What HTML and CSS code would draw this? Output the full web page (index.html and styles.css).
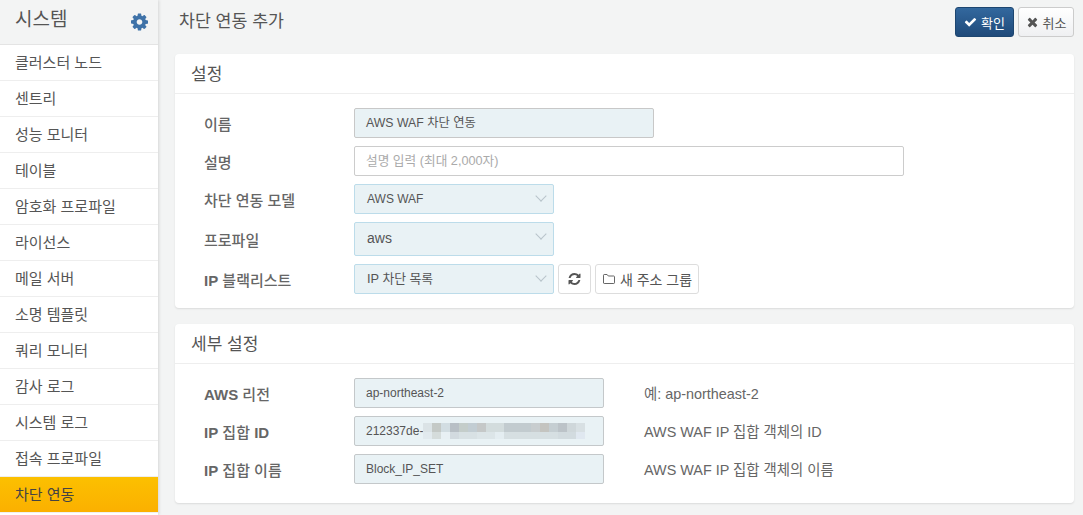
FILE: index.html
```html
<!DOCTYPE html>
<html lang="ko">
  <head>
    <meta charset="utf-8">
    <title>차단 연동 추가</title>
    <link rel="stylesheet" href="styles.css">
  </head>
  <body>
    <div class="sidebar">
      <div class="sidebar-header">
        <span class="sidebar-title">시스템</span>
        <svg class="gear" viewBox="0 0 1536 1792" aria-hidden="true"><path d="M1024 896q0-106-75-181t-181-75-181 75-75 181 75 181 181 75 181-75 75-181zm512-109v222q0 12-8 23t-20 13l-185 28q-19 54-39 91 35 50 107 138 10 12 10 25t-9 23q-27 37-99 108t-94 71q-12 0-26-9l-138-108q-44 23-91 38-16 136-29 186-7 28-36 28h-222q-14 0-24.500-8.500t-11.500-21.500l-28-184q-49-16-90-37l-141 107q-10 9-25 9-14 0-25-11-126-114-165-168-7-10-7-23 0-12 8-23 15-21 51-66.500t54-70.500q-27-50-41-99l-183-27q-13-2-21-12.500t-8-23.500v-222q0-12 8-23t19-13l186-28q14-46 39-92-40-57-107-138-10-12-10-24 0-10 9-23 26-36 98.500-107.500t94.500-71.500q13 0 26 10l138 107q44-23 91-38 16-136 29-186 7-28 36-28h222q14 0 24.500 8.500t11.500 21.500l28 184q49 16 90 37l142-107q9-9 24-9 13 0 25 10 129 119 165 170 7 8 7 22 0 12-8 23-15 21-51 66.500t-54 70.500q26 50 41 98l183 28q13 2 21 12.500t8 23.500z"/></svg>
      </div>
      <ul class="menu">
        <li>클러스터 노드</li>
        <li>센트리</li>
        <li>성능 모니터</li>
        <li>테이블</li>
        <li>암호화 프로파일</li>
        <li>라이선스</li>
        <li>메일 서버</li>
        <li>소명 템플릿</li>
        <li>쿼리 모니터</li>
        <li>감사 로그</li>
        <li>시스템 로그</li>
        <li>접속 프로파일</li>
        <li class="active">차단 연동</li>
      </ul>
    </div>

    <div class="main">
      <div class="page-top">
        <h1>차단 연동 추가</h1>
        <div class="actions">
          <button class="btn btn-primary">
            <svg class="icon" viewBox="0 0 1792 1792"><path d="M1671 566q0 40-28 68l-724 724-136 136q-28 28-68 28t-68-28l-136-136-362-362q-28-28-28-68t28-68l136-136q28-28 68-28t68 28l294 295 656-657q28-28 68-28t68 28l136 136q28 28 28 68z"/></svg>
            확인
          </button>
          <button class="btn btn-cancel">
            <svg class="icon" viewBox="0 0 1408 1792"><path d="M1298 1322q0 40-28 68l-136 136q-28 28-68 28t-68-28l-294-294-294 294q-28 28-68 28t-68-28l-136-136q-28-28-28-68t28-68l294-294-294-294q-28-28-28-68t28-68l136-136q28-28 68-28t68 28l294 294 294-294q28-28 68-28t68 28l136 136q28 28 28 68t-28 68l-294 294 294 294q28 28 28 68z"/></svg>
            취소
          </button>
        </div>
      </div>

      <div class="panel">
        <div class="panel-title">설정</div>
        <div class="panel-body settings">
          <div class="row">
            <label>이름</label>
            <div class="field field-name">AWS WAF 차단 연동</div>
          </div>
          <div class="row">
            <label>설명</label>
            <div class="field field-desc">설명 입력 (최대 2,000자)</div>
          </div>
          <div class="row">
            <label>차단 연동 모델</label>
            <div class="field select">AWS WAF</div>
          </div>
          <div class="row">
            <label>프로파일</label>
            <div class="field select select-tall">aws</div>
          </div>
          <div class="row">
            <label><b>IP</b> 블랙리스트</label>
            <div class="field select select-ko">IP 차단 목록</div>
            <button class="btn btn-icon">
              <svg class="icon" viewBox="0 0 1536 1792"><path d="M1511 1056q0 5-1 7-64 268-268 434.500t-478 166.500q-146 0-282.500-55t-243.500-157l-129 129q-19 19-45 19t-45-19-19-45v-448q0-26 19-45t45-19h448q26 0 45 19t19 45-19 45l-137 137q71 66 161 102t187 36q134 0 250-65t186-179q11-17 53-117 8-23 30-23h192q13 0 22.500 9.500t9.500 22.500zm25-800v448q0 26-19 45t-45 19h-448q-26 0-45-19t-19-45 19-45l138-138q-148-137-349-137-134 0-250 65t-186 179q-11 17-53 117-8 23-30 23h-199q-13 0-22.500-9.500t-9.500-22.500v-7q65-268 270-434.500t480-166.500q146 0 284 55.500t245 156.500l130-129q19-19 45-19t45 19 19 45z"/></svg>
            </button>
            <button class="btn btn-group">
              <svg class="icon-line" viewBox="0 0 14 12"><path d="M1.500 10V2.200c0-.4.300-.7.700-.7h2.900l1.200 1.500h5.500c.4 0 .7.300.7.700v6.100c0 .4-.3.700-.7.700H2.200c-.4 0-.7-.3-.7-.5z"/></svg>
              새 주소 그룹
            </button>
          </div>
        </div>
      </div>

      <div class="panel">
        <div class="panel-title">세부 설정</div>
        <div class="panel-body details">
          <div class="row">
            <label><b>AWS</b> 리전</label>
            <div class="field field-detail">ap-northeast-2</div>
            <span class="hint">예: ap-northeast-2</span>
          </div>
          <div class="row">
            <label><b>IP</b> 집합 <b>ID</b></label>
            <div class="field field-detail">212337de-<span class="mosaic"></span></div>
            <span class="hint">AWS WAF IP 집합 객체의 ID</span>
          </div>
          <div class="row">
            <label><b>IP</b> 집합 이름</label>
            <div class="field field-detail">Block_IP_SET</div>
            <span class="hint">AWS WAF IP 집합 객체의 이름</span>
          </div>
        </div>
      </div>
    </div>
  </body>
</html>
```

FILE: styles.css
```css
* {
  box-sizing: border-box;
}

body {
  margin: 0;
  height: 515px;
  overflow: hidden;
  display: flex;
  background: #f3f4f4;
  color: #555;
  font-family: "Liberation Sans", "Noto Sans CJK KR", sans-serif;
  font-size: 14px;
}

.sidebar {
  width: 158px;
  flex-shrink: 0;
  background: #fff;
  box-shadow: 1px 0 3px rgba(0, 0, 0, 0.12);
}

.sidebar-header {
  height: 45px;
  display: flex;
  justify-content: space-between;
  padding: 0 10px 0 15px;
  background: #f3f4f4;
  border-bottom: 1px solid #e4e4e4;
}

.sidebar-title {
  font-size: 19px;
  line-height: 39px;
  color: #555;
}

.gear {
  width: 17px;
  height: 20px;
  margin-top: 12px;
  fill: #3f72a8;
}

.menu {
  margin: 0;
  padding: 0;
  list-style: none;
}

.menu li {
  height: 36px;
  padding-left: 15px;
  font-size: 15px;
  line-height: 35px;
  border-bottom: 1px solid #eee;
  color: #555;
}

.menu li.active {
  background: linear-gradient(#fcc000, #fbb000);
  color: #444;
  border-bottom-color: #f0f0f0;
}

.main {
  flex: 1;
  padding: 7px 9px 0 17px;
}

.page-top {
  height: 47px;
  display: flex;
  justify-content: space-between;
}

.page-top h1 {
  margin: 0 0 0 4px;
  font-size: 17.300px;
  font-weight: 400;
  line-height: 28px;
  color: #555;
}

.actions {
  display: flex;
  gap: 4px;
  height: 30px;
}

.btn {
  height: 30px;
  padding: 0;
  display: flex;
  align-items: center;
  justify-content: center;
  gap: 4px;
  border: 1px solid #ddd;
  border-radius: 3px;
  background: #fff;
  color: #555;
  font-family: inherit;
  font-size: 14px;
  white-space: nowrap;
}

.btn-primary {
  width: 59px;
  background: linear-gradient(#33689e, #1f4a7a);
  border-color: #1d4670;
  color: #fff;
}

.btn-cancel {
  width: 56px;
  background: linear-gradient(#fff, #eff0f2);
  border: 1px solid #ccc;
}

.actions .btn {
  font-size: 13px;
}

.icon {
  width: 13px;
  height: 14px;
  fill: currentColor;
}

.panel {
  background: #fff;
  border-radius: 4px;
  margin-bottom: 16px;
  box-shadow: 0 1px 2px rgba(0, 0, 0, 0.1);
}

.panel-title {
  height: 40px;
  padding-left: 16px;
  line-height: 41px;
  font-size: 17px;
  color: #555;
  border-bottom: 1px solid #eee;
}

.panel-body {
  display: flex;
  flex-direction: column;
  gap: 8px;
  padding-left: 29px;
}

.settings {
  padding-top: 14px;
  padding-bottom: 14px;
}

.details {
  padding-top: 14px;
  padding-bottom: 19px;
}

.row {
  display: flex;
  align-items: center;
  gap: 4px;
}

.row label {
  width: 146px;
  flex-shrink: 0;
  font-size: 15px;
  font-weight: 500;
  color: #666;
}

.field {
  height: 30px;
  padding-left: 11px;
  line-height: 28px;
  font-size: 12px;
  color: #555;
  background: #e9f2f5;
  border: 1px solid #bcdcea;
  border-radius: 2px;
}

.field-name {
  width: 300px;
  font-size: 12.300px;
  border-color: #c8c8c8;
}

.field-desc {
  width: 550px;
  font-size: 12.700px;
  background: #fff;
  border-color: #ccc;
  color: #aaa;
}

.select {
  position: relative;
  width: 200px;
  padding-left: 12px;
}

.select::after {
  content: "";
  position: absolute;
  right: 8px;
  top: 7px;
  width: 7px;
  height: 7px;
  border-right: 1px solid #b8c4ca;
  border-bottom: 1px solid #b8c4ca;
  transform: rotate(45deg);
}

.select-tall {
  height: 34px;
  line-height: 31px;
  font-size: 14px;
}

.select-ko {
  font-size: 12.800px;
}

.btn-icon {
  width: 33px;
}

.btn-group {
  width: 104px;
}

.icon-line {
  width: 14px;
  height: 12px;
  fill: none;
  stroke: #666;
}

.field-detail {
  width: 250px;
  border-color: #c4c8ca;
  font-size: 12px;
  display: flex;
  align-items: center;
}

.mosaic {
  width: 162px;
  height: 16px;
  background:
    linear-gradient(90deg, #dbe3e6 0 9px, #c4c9c6 9px 18px, #d2dde2 18px 27px, #b8bfc5 27px 36px, #c4cdca 36px 45px, #c2cdd3 45px 54px, #c5c8c8 54px 63px, #d3dcdd 63px 81px, #c2cbcf 81px 108px, #c8cdcf 108px 117px, #c4c4c0 117px 126px, #c5ced2 126px 135px, #bcc3c8 135px 144px, #cfd7da 144px 153px, #d8e0e3 153px 162px) top / 100% 9px no-repeat,
    linear-gradient(90deg, #e2eaee 0 9px, #d5dcdb 9px 18px, #e8f0f4 18px 27px, #d2dadf 27px 36px, #d8e1e4 36px 54px, #dce5e8 54px 72px, #e4edf1 72px 81px, #d6dfe2 81px 135px, #d2dbdf 135px 153px, #e0e8f0 153px 162px) bottom / 100% 7px no-repeat;
}

.hint {
  margin: 0 0 2px 36px;
  font-size: 14.400px;
  color: #666;
}
```
